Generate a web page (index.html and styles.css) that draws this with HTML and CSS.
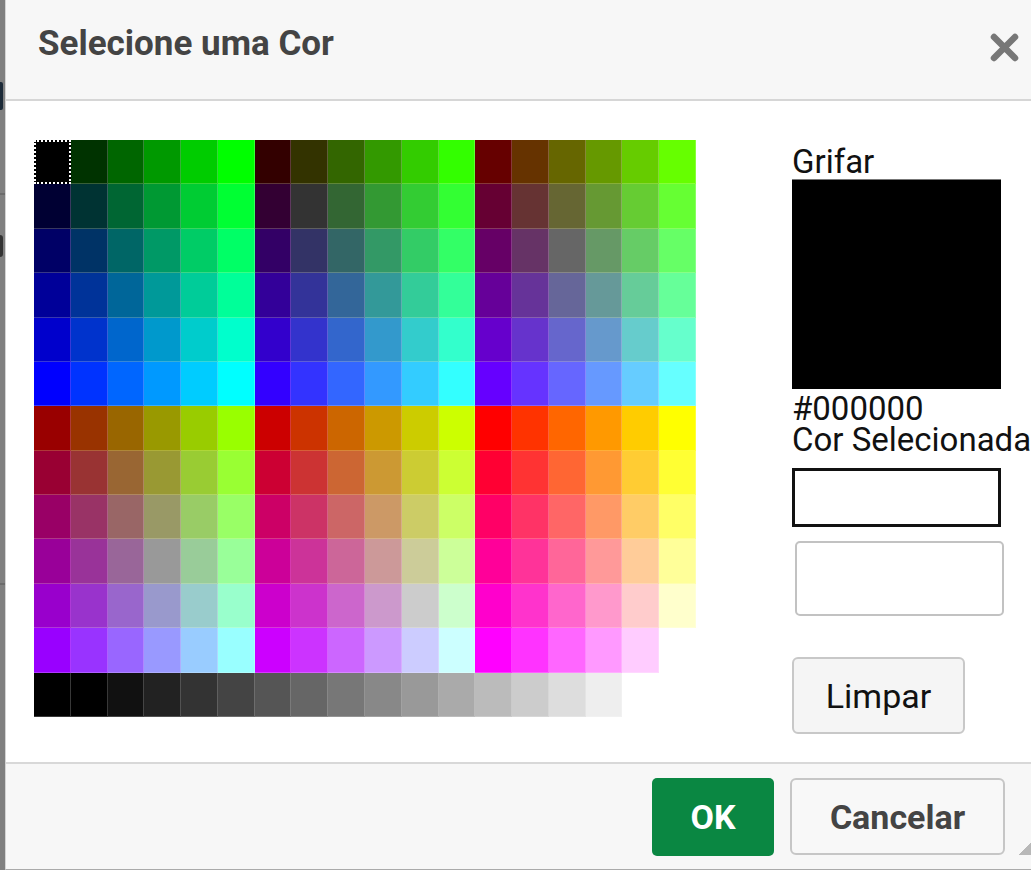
FILE: index.html
```html
<!DOCTYPE html>
<html lang="pt">
<head>
    <meta charset="UTF-8">
    <meta name="viewport" content="width=device-width, initial-scale=1.0">
    <title>Selecione uma Cor</title>
    <link rel="stylesheet" href="styles.css">
</head>
<body>
    <!-- Pedaço da página atrás do diálogo -->
    <div class="page-edge">
        <span class="edge-text"></span>
        <span class="edge-rule"></span>
        <span class="edge-dot"></span>
        <span class="edge-rule edge-rule-low"></span>
    </div>

    <div class="dialog">
        <div class="dialog-header">
            <h1>Selecione uma Cor</h1>
            <button class="close" aria-label="Fechar">
                <svg width="29" height="29" viewBox="0 0 29 29">
                    <path d="M4 4 L25 25 M25 4 L4 25" stroke="#777" stroke-width="6.5" stroke-linecap="round" fill="none"/>
                </svg>
            </button>
        </div>

        <div class="dialog-body">
            <div class="palette" id="palette"></div>

            <div class="picker-side">
                <div class="side-label">Grifar</div>
                <div class="swatch"></div>
                <div class="side-label hex-value">#000000</div>
                <div class="side-label">Cor Selecionada</div>
                <div class="chosen"></div>
                <input class="chosen-input" type="text">
                <button class="btn-limpar">Limpar</button>
            </div>
        </div>

        <div class="dialog-footer">
            <button class="btn btn-ok">OK</button>
            <button class="btn btn-cancel">Cancelar</button>
            <span class="grip"></span>
        </div>
    </div>

    <script src="script.js"></script>
</body>
</html>
```

FILE: styles.css
```css
* {
    margin: 0;
    padding: 0;
    box-sizing: border-box;
    font-family: 'Roboto', 'Liberation Sans', sans-serif;
}

body {
    background-color: #808080;
    height: 870px;
    overflow: hidden;
    display: flex;
}

/* Página por trás */
.page-edge {
    width: 5px;
    flex-shrink: 0;
    display: flex;
    flex-direction: column;
}

.edge-text {
    margin-top: 82px;
    height: 28px;
    width: 3px;
    background-color: #1c2a38;
    border-radius: 0 2px 2px 0;
}

.edge-rule {
    margin-top: 83px;
    height: 2px;
    background-color: #6c6c6c;
}

.edge-dot {
    margin-top: 40px;
    height: 22px;
    width: 3px;
    background-color: #333;
    border-radius: 0 3px 3px 0;
}

.edge-rule-low {
    margin-top: 326px;
}

/* Diálogo */
.dialog {
    width: 1040px;
    height: 870px;
    flex-shrink: 0;
    background-color: #fff;
    border-left: 1px solid #d4d4d4;
    border-bottom: 1px solid #aaa;
    display: flex;
    flex-direction: column;
}

.dialog-header {
    height: 101px;
    flex-shrink: 0;
    background-color: #f7f7f7;
    border-bottom: 2px solid #d6d6d6;
    display: flex;
    justify-content: space-between;
    align-items: flex-start;
    padding: 25px 26px 0 32px;
}

.dialog-header h1 {
    font-size: 35px;
    line-height: 38px;
    font-weight: bold;
    color: #444;
}

.close {
    margin-top: 8px;
    width: 29px;
    height: 29px;
    border: none;
    background: none;
    display: block;
}

.close svg {
    display: block;
}

.dialog-body {
    flex: 1;
    display: flex;
    align-items: flex-start;
    padding: 39px 0 0 28px;
}

/* Paleta */
.palette {
    width: 662px;
    display: grid;
    grid-template-columns: repeat(18, 1fr);
    grid-template-rows: repeat(13, 44.38px);
    flex-shrink: 0;
}

.cell {
    box-shadow: inset -1px -1px 0 rgba(255, 255, 255, 0.22);
}

.cell.selected {
    border: 2px dotted #fff;
    box-shadow: none;
}

/* Lado direito */
.picker-side {
    margin-left: 96px;
    padding-top: 6px;
    white-space: nowrap;
    display: flex;
    flex-direction: column;
    align-items: flex-start;
}

.side-label {
    font-size: 33px;
    line-height: 31px;
    color: #111;
}

.swatch {
    margin-top: 2px;
    width: 209px;
    height: 210px;
    background-color: #000;
    border-top: 1px solid #777;
}

.hex-value {
    margin-top: 4px;
}

.chosen {
    margin-top: 13px;
    width: 209px;
    height: 59px;
    border: 3px solid #111;
    background-color: #fff;
}

.chosen-input {
    margin: 14px 0 0 3px;
    width: 209px;
    height: 75px;
    border: 2px solid #c2c2c2;
    border-radius: 5px;
    background-color: #fff;
    outline: none;
}

.btn-limpar {
    margin-top: 41px;
    width: 173px;
    height: 77px;
    border: 2px solid #c8c8c8;
    border-radius: 6px;
    background-color: #f5f5f5;
    font-size: 34px;
    color: #111;
}

/* Rodapé */
.dialog-footer {
    height: 107px;
    flex-shrink: 0;
    background-color: #f7f7f7;
    border-top: 2px solid #d8d8d8;
    display: flex;
    justify-content: flex-end;
    align-items: flex-start;
    gap: 16px;
    padding: 14px 13px 0 0;
}

.btn {
    font-size: 34px;
    font-weight: bold;
    border-radius: 5px;
}

.btn-ok {
    width: 122px;
    height: 78px;
    border: none;
    background-color: #0a8742;
    color: #fff;
}

.btn-cancel {
    width: 215px;
    height: 77px;
    border: 2px solid #c6c6c6;
    border-radius: 6px;
    background-color: #f8f8f8;
    color: #444;
}

.grip {
    margin: 64px 0 0 -3px;
    width: 14px;
    height: 13px;
    background: linear-gradient(to bottom right, transparent 50%, #b8b8b8 50%);
}
```

FILE: script.js
```js
// monta a paleta de cores "web safe" + linha de cinzas
var hex = ['00', '33', '66', '99', 'CC', 'FF'];
var palette = document.getElementById('palette');

function addCell(color) {
    var cell = document.createElement('div');
    cell.className = 'cell';
    cell.style.backgroundColor = '#' + color;
    palette.appendChild(cell);
    return cell;
}

for (var row = 0; row < 12; row++) {
    var blue = hex[row % 6];
    var start = row < 6 ? 0 : 3;
    for (var r = start; r < start + 3; r++) {
        for (var g = 0; g < 6; g++) {
            addCell(hex[r] + hex[g] + blue);
        }
    }
}

var grays = ['000000', '000000', '111111', '222222', '333333', '444444',
    '555555', '666666', '777777', '888888', '999999', 'AAAAAA',
    'BBBBBB', 'CCCCCC', 'DDDDDD', 'EEEEEE', 'FFFFFF', 'FFFFFF'];
grays.forEach(function (c) { addCell(c); });

palette.firstChild.classList.add('selected');
```
